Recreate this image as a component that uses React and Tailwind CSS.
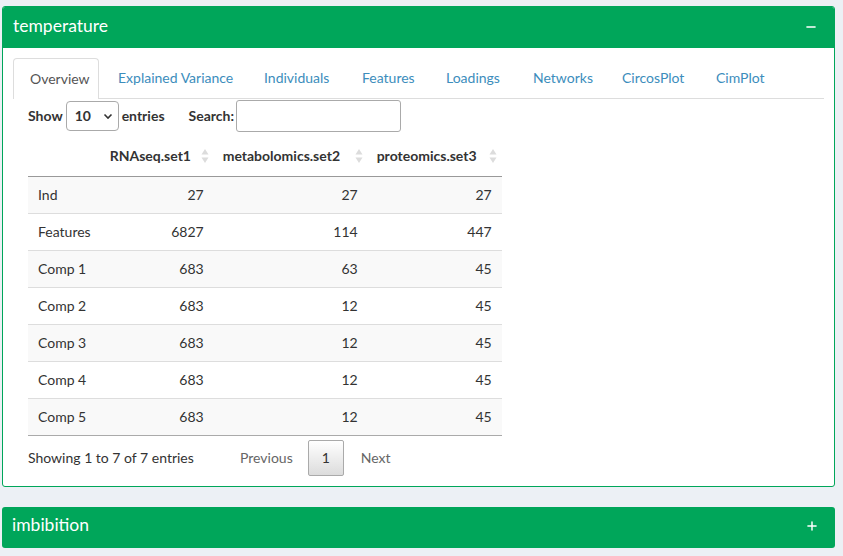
import { Minus, Plus } from 'lucide-react';

const tabs = [
  { label: 'Overview', w: 'w-[86px]' },
  { label: 'Explained Variance', w: 'w-[144px]' },
  { label: 'Individuals', w: 'w-[96px]' },
  { label: 'Features', w: 'w-[82px]' },
  { label: 'Loadings', w: 'w-[85px]' },
  { label: 'Networks', w: 'w-[87px]' },
  { label: 'CircosPlot', w: 'w-[92px]' },
  { label: 'CimPlot', w: 'w-[92px]' },
];

const rows = [
  ['Ind', 27, 27, 27],
  ['Features', 6827, 114, 447],
  ['Comp 1', 683, 63, 45],
  ['Comp 2', 683, 12, 45],
  ['Comp 3', 683, 12, 45],
  ['Comp 4', 683, 12, 45],
  ['Comp 5', 683, 12, 45],
];

// Sort arrows of the DataTables header
const SortIcon = () => (
  <svg width="8" height="16" viewBox="0 0 8 16" className="shrink-0">
    <path d="M4 1 L7.5 6.5 H0.5 Z" fill="#dcdcdc" />
    <path d="M4 15 L7.5 9.5 H0.5 Z" fill="#dcdcdc" />
  </svg>
);

const Header = ({ title, icon }) => (
  <div className="flex items-center justify-between h-[41px] pl-[10px] pr-[16px] pb-[4px] bg-[#00a65a] text-white">
    <span className="text-[17.5px] leading-none">{title}</span>
    {icon}
  </div>
);

const App = () => {
  return (
    <div
      className="min-h-[556px] bg-[#ecf0f5] pt-[6px] pl-[2px] text-[14px] text-[#333]"
      style={{ fontFamily: 'Lato, "Noto Sans", sans-serif' }}
    >
      {/* temperature box */}
      <div className="w-[833px] bg-white border border-[#00a65a] rounded-[3px] overflow-hidden">
        <Header title="temperature" icon={<Minus className="w-[14px] h-[14px] mt-[2px]" strokeWidth={2.5} />} />
        <div className="px-[10px] pt-[10px] pb-0">
          {/* tabs */}
          <div className="flex h-[41px] border-b border-[#ddd]">
            {tabs.map((t, i) => (
              <div
                key={t.label}
                className={`${t.w} shrink-0 mr-[2px] pl-[16px] pb-[2px] flex items-center rounded-t-[4px] border border-b-0 ${
                  i === 0
                    ? 'border-[#ddd] bg-white text-[#555] h-[41px] -mb-px'
                    : 'border-transparent text-[#3c8dbc]'
                }`}
              >
                {t.label}
              </div>
            ))}
          </div>

          {/* tab content */}
          <div className="px-[15px]">
            <div className="flex items-center h-[33px]">
              <span className="font-bold">Show</span>
              <div className="ml-[3px] w-[53px] h-[30px] border border-[#aaa] rounded-[4px] flex items-center justify-between pl-[8px] pr-[5px] font-bold">
                <span>10</span>
                <svg width="10" height="10" viewBox="0 0 10 10">
                  <path d="M1.5 3.5 L5 7 L8.5 3.5" stroke="#333" strokeWidth="1.6" fill="none" />
                </svg>
              </div>
              <span className="ml-[3px] font-bold">entries</span>
              <span className="ml-[24px] font-bold">Search:</span>
              <div className="ml-[2px] w-[165px] h-[32px] border border-[#aaa] rounded-[3px]" />
            </div>

            <table className="mt-[4px] border-collapse">
              <thead>
                <tr className="border-b border-[#999]">
                  <th className="w-[70px] h-[40px]" />
                  <th className="w-[113px] pl-[9px] pr-[5px] text-left font-bold">
                    <div className="flex items-center justify-between">
                      RNAseq.set1 <SortIcon />
                    </div>
                  </th>
                  <th className="w-[154px] pl-[9px] pr-[5px] text-left font-bold">
                    <div className="flex items-center justify-between">
                      metabolomics.set2 <SortIcon />
                    </div>
                  </th>
                  <th className="w-[134px] pl-[9px] pr-[5px] text-left font-bold">
                    <div className="flex items-center justify-between">
                      proteomics.set3 <SortIcon />
                    </div>
                  </th>
                </tr>
              </thead>
              <tbody>
                {rows.map((r, i) => (
                  <tr
                    key={r[0]}
                    className={`h-[37px] border-b ${i === rows.length - 1 ? 'border-[#aaa]' : 'border-[#ddd]'} ${
                      i % 2 === 0 ? 'bg-[#f9f9f9]' : 'bg-white'
                    }`}
                  >
                    <td className="px-[10px]">{r[0]}</td>
                    <td className="px-[10px] text-right">{r[1]}</td>
                    <td className="px-[10px] text-right">{r[2]}</td>
                    <td className="px-[10px] text-right">{r[3]}</td>
                  </tr>
                ))}
              </tbody>
            </table>

            {/* footer */}
            <div className="flex items-center h-[44px] mb-[6px]">
              <span className="w-[212px]">Showing 1 to 7 of 7 entries</span>
              <span className="text-[#666]">Previous</span>
              <div className="ml-[15px] w-[36px] h-[36px] flex items-center justify-center border border-[#aaa] rounded-[2px] bg-gradient-to-b from-white to-[#dcdcdc]">
                1
              </div>
              <span className="ml-[17px] text-[#666]">Next</span>
            </div>
          </div>
        </div>
      </div>

      {/* imbibition box */}
      <div className="mt-[20px] w-[833px] rounded-[3px] overflow-hidden">
        <Header title="imbibition" icon={<Plus className="w-[14px] h-[14px] mt-[2px]" strokeWidth={2.5} />} />
      </div>
    </div>
  );
};

export default App;
